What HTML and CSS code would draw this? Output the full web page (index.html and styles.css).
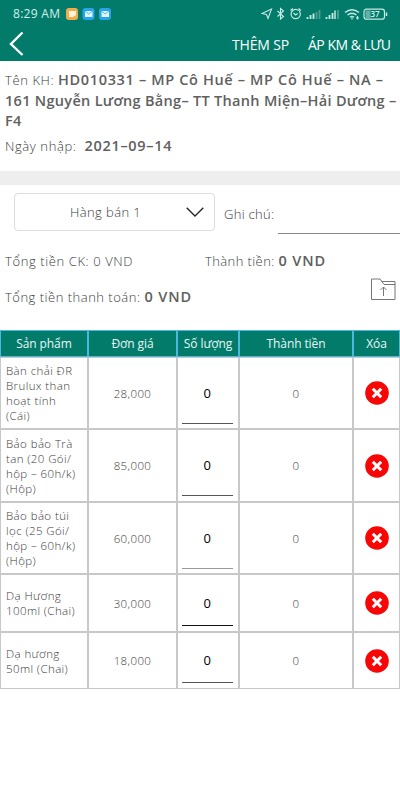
FILE: index.html
```html
<!DOCTYPE html>
<html lang="vi">
<head>
    <meta charset="UTF-8">
    <meta name="viewport" content="width=device-width, initial-scale=1.0">
    <title>Đơn hàng</title>
    <link rel="stylesheet" href="styles.css">
</head>
<body>
    <header class="header">
        <div class="status-bar">
            <span class="clock">8:29 AM</span>
            <svg class="apps" width="46" height="14" viewBox="0 0 46 14">
                <rect x="0" y="1" width="12" height="12" rx="3" fill="#efad4e"/>
                <path d="M3 4h7v4l-3 2H3z" fill="#fff3dc"/>
                <rect x="16.500" y="1" width="12" height="12" rx="3" fill="#27a5ea"/>
                <rect x="19" y="4" width="7.500" height="6" fill="#e2f5ff"/>
                <path d="M19 4l3.700 3 3.800-3" fill="none" stroke="#55b9ec"/>
                <rect x="33" y="1" width="12" height="12" rx="3" fill="#27a5ea"/>
                <rect x="35.500" y="4" width="7.500" height="6" fill="#e2f5ff"/>
                <path d="M35.500 4l3.700 3 3.800-3" fill="none" stroke="#55b9ec"/>
            </svg>
            <svg class="system" width="128" height="16" viewBox="0 0 128 16" fill="none" stroke="#c5eae3">
                <path d="M1 7.500L10.500 3 7 12.500 5.500 8.500z" stroke-width="1.100"/>
                <path d="M16.500 5l6 5.500-3 2.500V2.500l3 2.500-6 5.500" stroke-width="1.100"/>
                <circle cx="34.700" cy="8" r="4.600" stroke-width="1.200"/>
                <path d="M29.500 4.500l2.500-2M40 4.500l-2.500-2M32.500 7l2.200 2 2-1.500" stroke-width="1.200"/>
                <g stroke-width="1.800">
                    <path d="M46.500 13v-2M49.500 13v-4M52.500 13V7.500M65.500 13v-2M68.500 13v-4M71.500 13V7"/>
                    <path d="M74 13V4.500" stroke-width="1.500"/>
                    <path d="M55.500 13V6M58.500 13V4M77 13V4" stroke="#4c9f94"/>
                </g>
                <path d="M84 6.500q7-5.500 14 0M86.500 9q4.500-3.500 9 0M89 11.300q2-1.500 4 0" stroke-width="1.400"/>
                <path d="M91 12v1.500M96.500 10v3.500M95 12h3" stroke-width="1.200"/>
                <rect x="103" y="3.200" width="20.500" height="10" rx="2.500" stroke-width="1.200"/>
                <rect x="104.500" y="4.500" width="5" height="7.500" fill="#69aea5" stroke="none"/>
                <path d="M125.500 6.500v3.500" stroke-width="1.500"/>
                <text class="battery" x="109.500" y="11.300">37</text>
            </svg>
        </div>
        <div class="toolbar">
            <svg class="back" width="16" height="26" viewBox="0 0 16 26">
                <path d="M13.500 1.500L2 13l11.500 11" fill="none" stroke="#fff" stroke-width="2.400"/>
            </svg>
            <a class="action add">THÊM SP</a>
            <a class="action save">ÁP KM &amp; LƯU</a>
        </div>
    </header>

    <section class="customer">
        <div class="name">
            <span class="label">Tên KH:</span> <b class="line1">HD010331 – MP Cô Huế – MP Cô Huế – NA –</b><br>
            <b class="line2">161 Nguyễn Lương Bằng– TT Thanh Miện–Hải Dương –</b><br>
            <b>F4</b>
        </div>
        <div class="date"><span class="label">Ngày nhập:</span><b>2021–09–14</b></div>
    </section>

    <section class="order">
        <div class="type-row">
            <div class="select">
                <span>Hàng bán 1</span>
                <svg width="18" height="10" viewBox="0 0 18 10">
                    <path d="M.7.700L9 9 17.300.700" fill="none" stroke="#222" stroke-width="1.300"/>
                </svg>
            </div>
            <span class="note-label">Ghi chú:</span>
            <div class="note"></div>
        </div>
        <div class="totals">
            <span class="discount">Tổng tiền CK: 0 VND</span>
            <span class="amount"><span>Thành tiền:</span> <b>0 VND</b></span>
        </div>
        <div class="payment">
            <span class="pay-label">Tổng tiền thanh toán:</span><b>0 VND</b>
            <svg class="folder" width="25" height="22" viewBox="0 0 25 22" fill="none" stroke="#777">
                <path d="M.5 21.500V1h8.500l4 5.500h11v15zM10.500 3.500H24v3.500M12.500 18v-9M9.500 12l3-3 3 3"/>
            </svg>
        </div>
    </section>

    <table class="products">
        <colgroup>
            <col class="c-name"><col class="c-price"><col class="c-qty"><col class="c-total"><col class="c-del">
        </colgroup>
        <thead>
            <tr><th>Sản phẩm</th><th>Đơn giá</th><th>Số lượng</th><th>Thành tiền</th><th>Xóa</th></tr>
        </thead>
        <tbody>
            <tr class="r1">
                <td class="product">Bàn chải ĐR<br>Brulux than<br>hoạt tính<br>(Cái)</td>
                <td>28,000</td>
                <td class="qty"><div>0</div></td>
                <td>0</td>
                <td><svg class="del" viewBox="0 0 24 24"><circle cx="12" cy="12" r="11.800"/><path d="M7.800 7.800l8.400 8.400M16.200 7.800l-8.400 8.400"/></svg></td>
            </tr>
            <tr class="r2">
                <td class="product">Bảo bảo Trà<br>tan (20 Gói/<br>hộp – 60h/k)<br>(Hộp)</td>
                <td>85,000</td>
                <td class="qty"><div>0</div></td>
                <td>0</td>
                <td><svg class="del" viewBox="0 0 24 24"><circle cx="12" cy="12" r="11.800"/><path d="M7.800 7.800l8.400 8.400M16.200 7.800l-8.400 8.400"/></svg></td>
            </tr>
            <tr class="r1">
                <td class="product">Bảo bảo túi<br>lọc (25 Gói/<br>hộp – 60h/k)<br>(Hộp)</td>
                <td>60,000</td>
                <td class="qty soft"><div>0</div></td>
                <td>0</td>
                <td><svg class="del" viewBox="0 0 24 24"><circle cx="12" cy="12" r="11.800"/><path d="M7.800 7.800l8.400 8.400M16.200 7.800l-8.400 8.400"/></svg></td>
            </tr>
            <tr class="r3">
                <td class="product">Dạ Hương<br>100ml (Chai)</td>
                <td>30,000</td>
                <td class="qty"><div>0</div></td>
                <td>0</td>
                <td><svg class="del" viewBox="0 0 24 24"><circle cx="12" cy="12" r="11.800"/><path d="M7.800 7.800l8.400 8.400M16.200 7.800l-8.400 8.400"/></svg></td>
            </tr>
            <tr class="r4">
                <td class="product">Dạ hương<br>50ml (Chai)</td>
                <td>18,000</td>
                <td class="qty"><div>0</div></td>
                <td>0</td>
                <td><svg class="del" viewBox="0 0 24 24"><circle cx="12" cy="12" r="11.800"/><path d="M7.800 7.800l8.400 8.400M16.200 7.800l-8.400 8.400"/></svg></td>
            </tr>
        </tbody>
    </table>
</body>
</html>
```
FILE: styles.css
```css
* {
    box-sizing: border-box;
}
body {
    margin: 0;
    background: #fff;
    color: #3c3c3c;
    font-family: "Open Sans", "Noto Sans", sans-serif;
    font-size: 13px;
    font-weight: 300;
    letter-spacing: 0.4px;
}
b {
    color: #606060;
    font-weight: 600;
}
svg {
    display: block;
    flex: none;
}
.header {
    height: 61px;
    background: #027b6b;
    color: #fff;
}
.status-bar {
    display: flex;
    align-items: center;
    height: 27px;
    padding-left: 13px;
}
.clock {
    width: 53px;
    font-size: 12px;
    font-weight: 400;
    letter-spacing: 0.3px;
    color: #d5efea;
    white-space: nowrap;
}
.system {
    margin-left: 149px;
}
.battery {
    font-size: 8px;
    font-weight: 600;
    letter-spacing: 0;
    fill: #d5efea;
    stroke: none;
}
.toolbar {
    display: flex;
    align-items: center;
    height: 34px;
    padding-left: 9px;
}
.action {
    font-size: 14px;
    font-weight: 400;
    white-space: nowrap;
}
.add {
    width: 76px;
    margin-left: 207px;
    letter-spacing: -0.15px;
}
.save {
    letter-spacing: -0.5px;
}
.customer {
    height: 124px;
    padding: 9px 0 0 5px;
    border-bottom: 14px solid #eee;
    line-height: 20.5px;
    white-space: nowrap;
}
.customer b {
    font-size: 14.5px;
}
.label {
    letter-spacing: 0.6px;
}
.customer .line1 {
    letter-spacing: 0.65px;
}
.customer .line2 {
    letter-spacing: 0.3px;
}
.date {
    margin-top: 4px;
}
.date b {
    margin-left: 8px;
    letter-spacing: 0.7px;
}
.type-row {
    display: flex;
    height: 49px;
    padding: 8px 0 0 14px;
}
.select {
    display: flex;
    align-items: center;
    width: 201px;
    height: 38px;
    padding: 0 10px 0 55px;
    border: 1px solid #ddd;
    border-radius: 4px;
}
.select svg {
    margin-left: auto;
}
.note-label {
    width: 54px;
    margin-left: 9px;
    line-height: 42px;
    letter-spacing: 0.3px;
}
.note {
    flex: 1;
    height: 41px;
    border-bottom: 1px solid #888;
}
.totals {
    display: flex;
    height: 40px;
    padding: 13px 0 0 5px;
    line-height: 28px;
}
.discount {
    width: 200px;
    letter-spacing: 0.6px;
}
.totals b,
.payment b {
    font-size: 14.5px;
    letter-spacing: 0.9px;
}
.payment {
    display: flex;
    height: 56px;
    padding: 4px 4px 0 5px;
    line-height: 38px;
    white-space: nowrap;
}
.pay-label {
    letter-spacing: 0.5px;
}
.payment b {
    margin-left: 4px;
}
.folder {
    margin-left: auto;
}
.products {
    width: 400px;
    table-layout: fixed;
    border-collapse: separate;
    border-spacing: 0;
    font-size: 11.5px;
    font-weight: 300;
}
.c-name { width: 88px; }
.c-price { width: 89px; }
.c-qty { width: 62px; }
.c-total { width: 114px; }
.c-del { width: 47px; }
th {
    height: 27px;
    padding: 0;
    border: 1px solid #4cb9dc;
    background: #027b6b;
    color: #e9f7f4;
    font-size: 12px;
    font-weight: 400;
    letter-spacing: -0.1px;
    line-height: 15px;
    white-space: nowrap;
}
td {
    padding: 0;
    border: 1px solid #c8c8c8;
    text-align: center;
    line-height: 15px;
}
.r1 { height: 72px; }
.r2 { height: 73px; }
.r3 { height: 58px; }
.r4 { height: 57px; }
.product {
    padding-left: 5px;
    text-align: left;
    white-space: nowrap;
}
.qty {
    vertical-align: bottom;
    padding: 0 5px 4px 4px;
    color: #000;
    font-size: 13px;
    font-weight: 400;
}
.qty div {
    height: 39px;
    border-bottom: 1px solid #555;
    line-height: 17px;
}
.r2 .qty {
    padding-bottom: 5px;
}
.r3 .qty,
.r4 .qty {
    padding-bottom: 5px;
}
.r3 .qty div,
.r4 .qty div {
    height: 31px;
}
.r3 .qty div {
    border-color: #111;
}
.soft div {
    border-color: #999;
}
.del {
    width: 24px;
    height: 24px;
    margin: 0 auto;
}
.del circle {
    fill: #f80606;
}
.del path {
    fill: none;
    stroke: #fff;
    stroke-width: 3;
}
```
